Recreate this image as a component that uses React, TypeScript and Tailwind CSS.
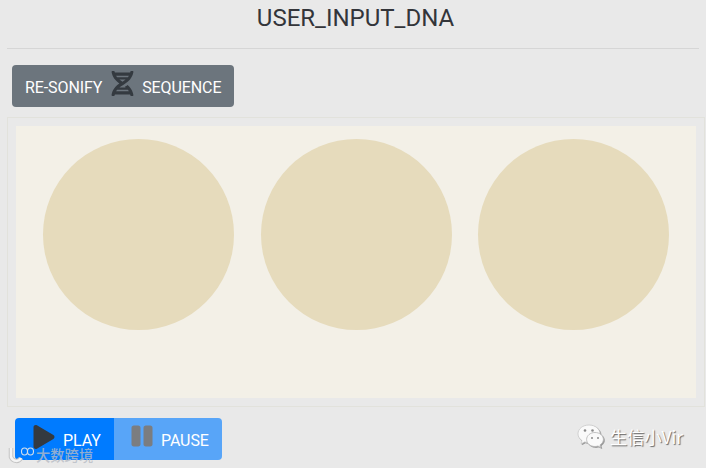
import { FaDna, FaPlay, FaPause } from 'react-icons/fa'

function WechatMark() {
  return (
    <svg width="28" height="26" viewBox="0 0 28 26" className="drop-shadow-[1px_1px_0.5px_#999]">
      <path d="M12 1C5.8 1 1 4.8 1 9.8c0 2.8 1.5 5.1 4 6.8l-1 3.2 3.6-1.9c1.4.4 2.9.6 4.4.6 6.2 0 11-3.9 11-8.7S18.2 1 12 1Z" fill="#fafafa" stroke="#c4c4c4" strokeWidth="0.7" />
      <path d="M18 8.5c-4.7 0-8.4 3.1-8.4 7s3.7 7 8.4 7c1 0 2-.2 3-.5l2.8 1.5-.8-2.6c2-1.3 3.4-3.2 3.4-5.4 0-3.9-3.7-7-8.4-7Z" fill="#fafafa" stroke="#b4b4b4" strokeWidth="0.8" />
      <circle cx="8" cy="6.5" r="1.3" fill="#8a8a8a" />
      <circle cx="15.5" cy="6.5" r="1.3" fill="#8a8a8a" />
      <circle cx="15" cy="14" r="1" fill="#8a8a8a" />
      <circle cx="21" cy="14" r="1" fill="#8a8a8a" />
    </svg>
  )
}

export default function App() {
  return (
    <div className="relative w-[706px] h-[468px] overflow-hidden bg-[#e9e9e9] font-['Roboto',sans-serif]">
      {/* Title */}
      <h2 className="h-[37px] pt-[3px] pl-[5px] text-center text-[24px] leading-[30px] font-normal text-[#33353a]">USER_INPUT_DNA</h2>
      <div className="mx-[7px] mt-[11px] h-px bg-[#d6d6d6]" />

      <div className="pl-[12px] pt-[16px]">
        <button className="flex items-center h-[42px] w-[222px] pl-[13px] pt-[3px] rounded bg-[#6c757d] text-white text-[16px] tracking-[-0.1px]">
          <span>RE-SONIFY</span>
          <FaDna className="ml-[8px] mr-[7px] -mt-[8px] text-[#343a40]" size={25} />
          <span>SEQUENCE</span>
        </button>
      </div>

      {/* Sequence panel */}
      <div className="ml-[7px] mt-[10px] w-[698px] h-[290px] border border-[#e2e2dc] p-[8px]">
        <div className="flex justify-evenly items-start h-[272px] pt-[13px] bg-[#f3f0e7]">
          <div className="w-[191px] h-[191px] rounded-full bg-[#e6dbbc]" />
          <div className="w-[191px] h-[191px] rounded-full bg-[#e6dbbc]" />
          <div className="w-[191px] h-[191px] rounded-full bg-[#e6dbbc]" />
        </div>
      </div>

      {/* Transport */}
      <div className="flex ml-[15px] mt-[11px] w-[207px] h-[42px] text-[16px] tracking-[-0.1px] text-white">
        <button className="flex items-center w-[99px] pl-[17px] rounded-l bg-[#007bff]">
          <FaPlay className="-mt-[4px] text-[#343a40]" size={24} />
          <span className="ml-[7px] pt-[3px]">PLAY</span>
        </button>
        <button className="flex items-center w-[108px] pl-[16px] rounded-r bg-[#58a5f8]">
          <FaPause className="-mt-[6px] text-[#7b7d80]" size={24} />
          <span className="ml-[7px] pt-[3px]">PAUSE</span>
        </button>
      </div>

      {/* Watermarks */}
      <div className="absolute left-[7px] top-[443px] flex items-center text-[14.3px] leading-[20px] font-medium text-[#b8bcc4]/80 font-['Noto_Sans_CJK_SC',sans-serif]">
        <svg width="29" height="20" viewBox="0 0 29 20" fill="none">
          <path d="M4 4v9c2 5 8 5 10 1" stroke="#c4c4c4" strokeWidth="4.5" />
          <path d="M4 4v9c2 5 8 5 10 1" stroke="#f4f4f4" strokeWidth="2.5" />
          <ellipse cx="17.5" cy="7.5" rx="3" ry="3.5" stroke="#d4dfea" strokeWidth="1.1" />
          <ellipse cx="23.5" cy="7.5" rx="3" ry="3.5" stroke="#d4dfea" strokeWidth="1.1" />
        </svg>
        <span className="pt-[2px]">大数跨境</span>
      </div>
      <div className="absolute left-[577px] top-[424px] flex items-center gap-[5px] text-white text-[17.2px] leading-[26px] font-['Noto_Sans_CJK_SC',sans-serif] [text-shadow:1px_1px_1px_#666]">
        <WechatMark />
        <span>生信小Vir</span>
      </div>
    </div>
  )
}
